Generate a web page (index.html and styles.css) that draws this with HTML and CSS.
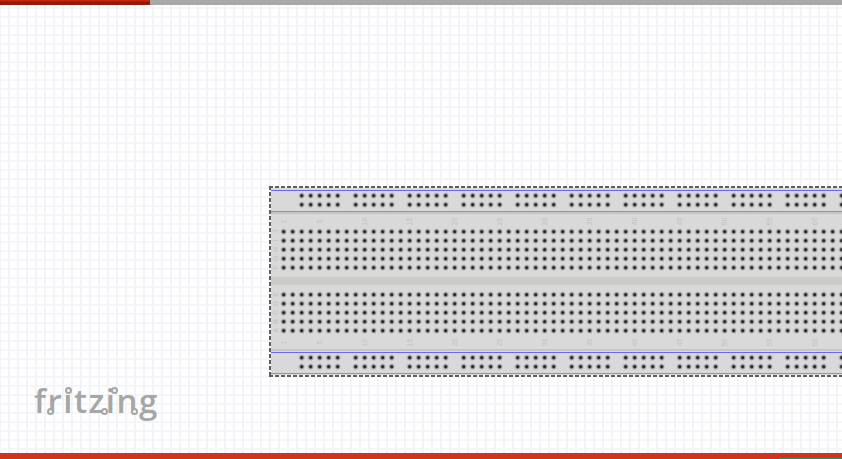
FILE: index.html
```html
<!DOCTYPE html>
<html lang="en">
<head>
<meta charset="utf-8">
<title>Fritzing breadboard</title>
<link rel="stylesheet" href="styles.css">
</head>
<body>
<div class="app">
  <div class="top-bar"><div class="top-bar-fill"></div></div>
  <main class="canvas">
    <section class="board">
      <div class="rail rail-top">
        <div class="line-blue"></div>
        <div class="rail-groups">
          <i class="group"></i><i class="group"></i><i class="group"></i><i class="group"></i><i class="group"></i><i class="group"></i><i class="group"></i><i class="group"></i><i class="group"></i><i class="group"></i><i class="group"></i>
        </div>
        <div class="line-red"></div>
      </div>
      <div class="main main-upper">
        <div class="col-labels col-labels-top">
          <span class="first">1</span><span>5</span><span>10</span><span>15</span><span>20</span><span>25</span><span>30</span><span>35</span><span>40</span><span>45</span><span>50</span><span>55</span><span>60</span>
        </div>
        <div class="field">
          <div class="row-labels"><b>J</b><b>I</b><b>H</b><b>G</b><b>F</b></div>
          <div class="holes"></div>
        </div>
      </div>
      <div class="gutter"></div>
      <div class="main main-lower">
        <div class="field">
          <div class="row-labels"><b>E</b><b>D</b><b>C</b><b>B</b><b>A</b></div>
          <div class="holes"></div>
        </div>
        <div class="col-labels col-labels-bottom">
          <span class="first">1</span><span>5</span><span>10</span><span>15</span><span>20</span><span>25</span><span>30</span><span>35</span><span>40</span><span>45</span><span>50</span><span>55</span><span>60</span>
        </div>
      </div>
      <div class="rail rail-bottom">
        <div class="line-blue"></div>
        <div class="rail-groups">
          <i class="group"></i><i class="group"></i><i class="group"></i><i class="group"></i><i class="group"></i><i class="group"></i><i class="group"></i><i class="group"></i><i class="group"></i><i class="group"></i><i class="group"></i>
        </div>
        <div class="line-red"></div>
      </div>
    </section>
    <div class="logo">fritzing
      <i class="ring ring-i1"></i><i class="ring ring-i2"></i><i class="ring ring-r"></i><i class="ring ring-z"></i><i class="ring ring-n"></i>
    </div>
  </main>
  <div class="bottom-bar"><div class="bottom-bar-fill"></div></div>
</div>
</body>
</html>
```

FILE: styles.css
```css
* { box-sizing: border-box; }
html, body { margin: 0; height: 100%; overflow: hidden; background: #fff; }

.app { display: flex; flex-direction: column; height: 459px; width: 842px; overflow: hidden; }

.top-bar { flex: 0 0 5px; background: #a8a8a8; }
.top-bar-fill { width: 150px; height: 5px; background: linear-gradient(#c4260f 0, #c4260f 1px, #8f1c0b 2px, #8f1c0b 100%); }

.bottom-bar { flex: 0 0 6px; background: #d2321f; position: relative; }
.bottom-bar-fill { position: absolute; left: 779px; right: 0; bottom: 0; height: 1px; background: #1f9d5a; }

.canvas {
  flex: 1;
  position: relative;
  padding: 181px 0 0 269px;
  background-color: #fff;
  background-image:
    linear-gradient(90deg, #f3f4f8 0, #f3f4f8 2px, transparent 2px),
    linear-gradient(#f5f6f9 0, #f5f6f9 2px, transparent 2px);
  background-size: 9px 9px;
  background-position: -1px 0, 0 2px;
}

.board {
  width: 700px;
  height: 191px;
  border: 2px solid transparent;
  display: flex;
  flex-direction: column;
  background:
    repeating-linear-gradient(90deg, #5e5e5e 0 4.5px, transparent 4.5px 6px) 0 0 / 100% 2px no-repeat border-box,
    repeating-linear-gradient(90deg, #5e5e5e 0 4.5px, transparent 4.5px 6px) 0 100% / 100% 2px no-repeat border-box,
    repeating-linear-gradient(#5e5e5e 0 4.5px, transparent 4.5px 6px) 0 0 / 2px 100% no-repeat border-box,
    linear-gradient(#d9d9d9, #d9d9d9) padding-box;
}

.rail { flex: none; height: 26px; padding-left: 26px; }
.rail-top { padding-top: 2px; border-bottom: 2px solid #c6c4c4; }
.rail-bottom { padding-top: 1px; border-top: 2px solid #c6c6c6; }

.line-blue { height: 1px; margin-left: -26px; background: #6a6aee; }
.line-red { height: 1px; margin: 2px 0 0 -26px; background: #d87878; }

.rail-groups { display: flex; gap: 9px; }
.group { display: block; flex: none; width: 45px; height: 18px; }

.group, .holes {
  background-image:
    radial-gradient(circle at 4.7px 4.7px, #262626 0, #2e2e2e 1.1px, #9a9a9a 2px, #c6c6c6 2.9px, rgba(217,217,217,0) 3.8px),
    radial-gradient(circle at 5.2px 5.2px, #e6e6e6 0, #e6e6e6 2.4px, rgba(217,217,217,0) 3.6px);
  background-size: 9px 9px;
}

.main { flex: none; }
.main-upper { height: 63px; }
.main-lower { height: 64px; padding-top: 5px; }

.col-labels { display: flex; padding-left: 8px; align-items: center; }
.col-labels-top { height: 13px; padding-top: 2px; }
.col-labels-bottom { height: 14px; }
.col-labels span {
  flex: none;
  width: 9px;
  margin-right: 36px;
  font: 7px/9px "Liberation Sans", sans-serif;
  color: #c0c0c0;
  text-align: center;
  transform: rotate(-90deg);
}
.col-labels span.first { margin-right: 27px; }

.field { display: flex; height: 45px; }
.row-labels { flex: none; width: 8px; display: flex; flex-direction: column; }
.row-labels b {
  height: 9px;
  font: 700 7px/9px "Liberation Sans", sans-serif;
  color: #c6c6c6;
  text-align: center;
  transform: rotate(-90deg);
}
.holes { flex: 1; }

.gutter { flex: none; height: 8px; background: #cccbc8; }

.logo {
  position: absolute;
  left: 34px;
  top: 374px;
  width: 126px;
  height: 44px;
  font: 600 33px/44px "Open Sans", sans-serif;
  letter-spacing: 1.5px;
  color: #a6a6a6;
}
.ring { position: absolute; width: 7px; height: 7px; border: 2px solid #a6a6a6; border-radius: 50%; background: #fbfbfc; }
.ring-i1 { left: 31px; top: 8px; }
.ring-i2 { left: 77px; top: 8px; }
.ring-r { left: 13px; top: 29px; }
.ring-z { left: 67px; top: 29px; }
.ring-n { left: 97px; top: 29px; }
```
